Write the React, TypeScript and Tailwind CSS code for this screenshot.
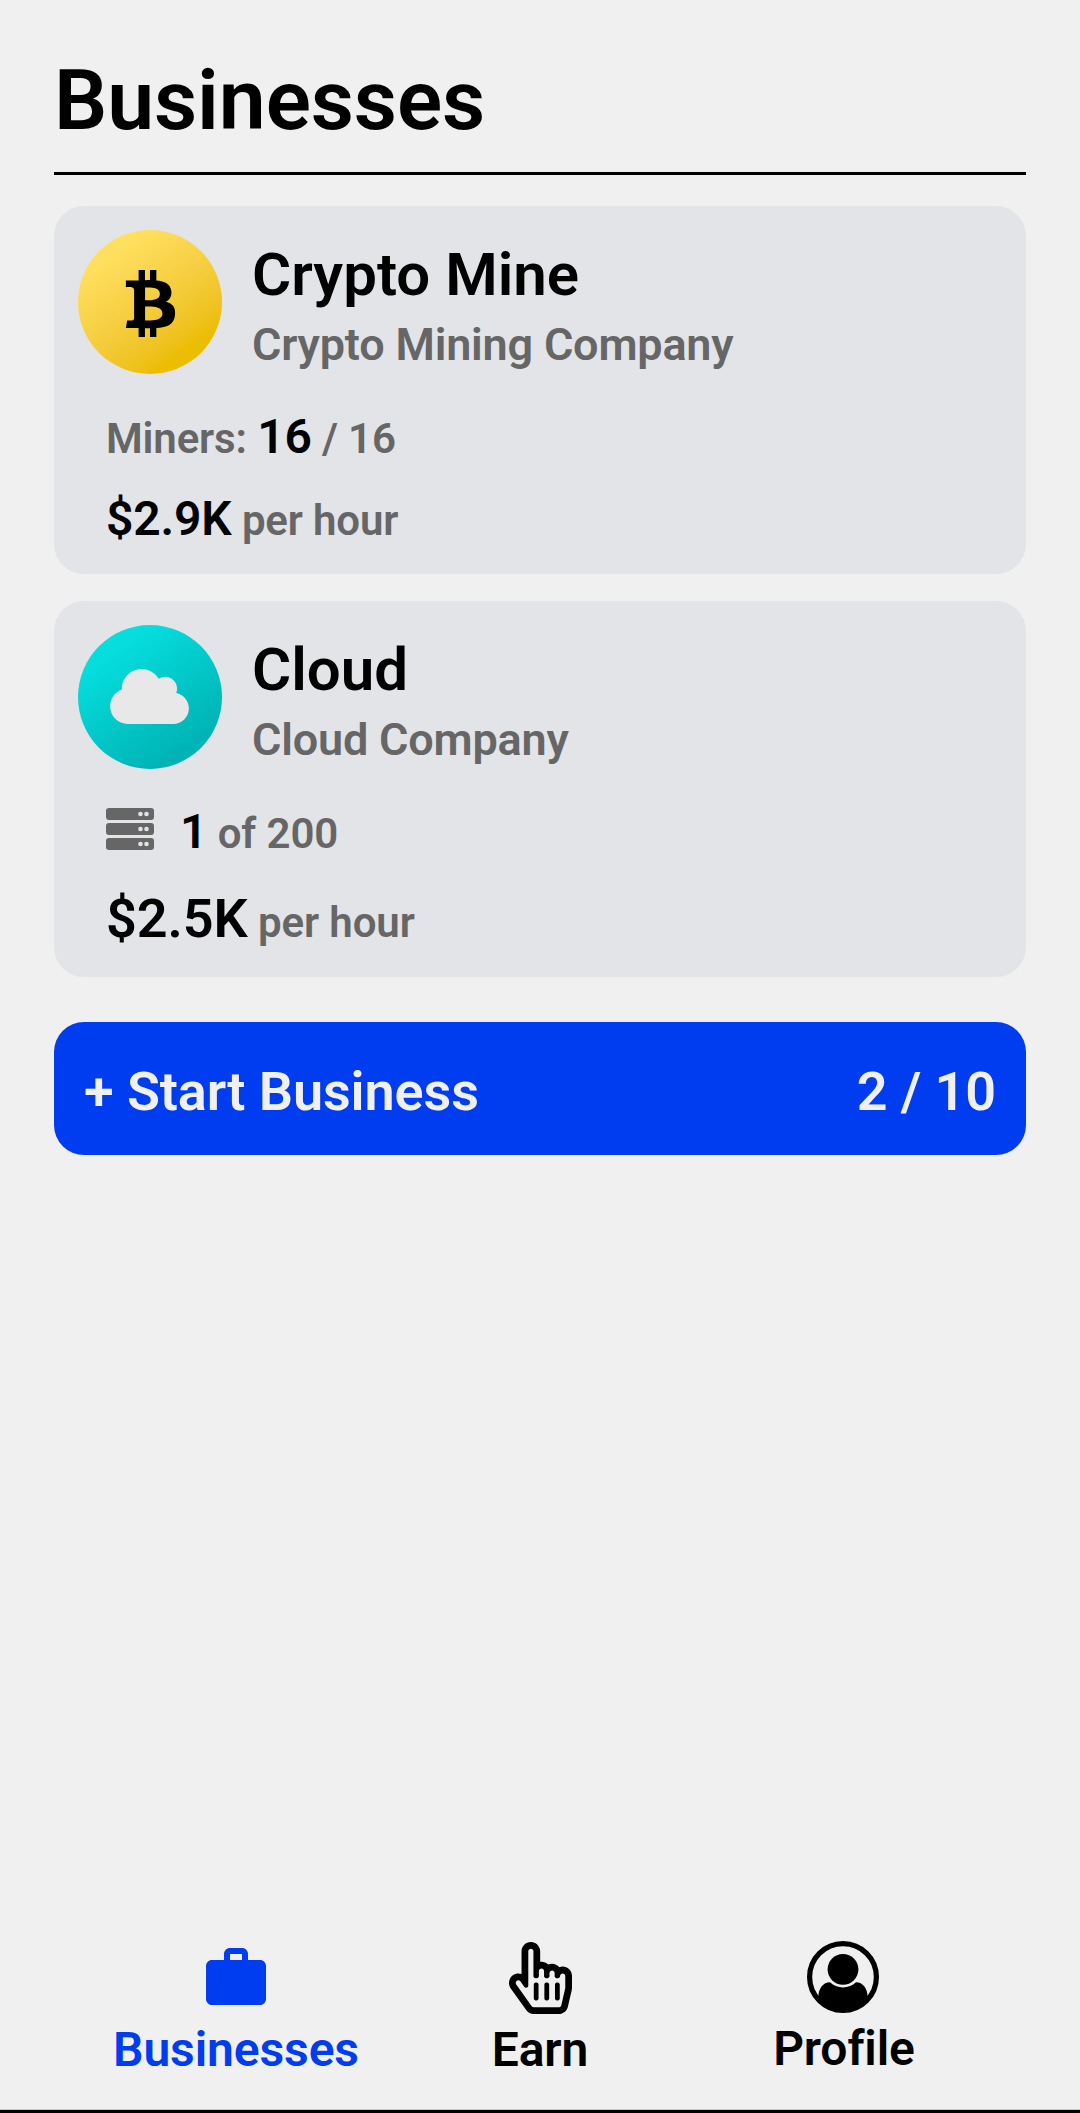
import type { ReactNode } from 'react';
import { FaBtc, FaCloud, FaRegHandPointer } from 'react-icons/fa';
import { MdWork } from 'react-icons/md';

function ServerIcon() {
  return (
    <svg viewBox="0 0 48 42" className="h-[42px] w-12">
      {[0, 15, 30].map((y) => (
        <g key={y}>
          <rect y={y} width="48" height="12" rx="3" fill="#666666" />
          <circle cx="34.5" cy={y + 6} r="2.3" fill="#e2e4e8" />
          <circle cx="40.5" cy={y + 6} r="2.3" fill="#e2e4e8" />
        </g>
      ))}
    </svg>
  );
}

function ProfileIcon() {
  return (
    <svg viewBox="0 0 72 72" className="-mt-px mr-0.5 size-[72px]">
      <circle cx="36" cy="36" r="33.4" fill="none" stroke="currentColor" strokeWidth="5.2" />
      <circle cx="36" cy="28.3" r="15.4" fill="currentColor" />
      <path
        d="M23 41.3C26.5 44.6 31 46.5 36 46.5S45.5 44.6 49 41.3C56 41.3 60.3 47.5 60.6 55.5C55 64.5 46 70 36 70S17 64.5 11.4 55.5C11.7 47.5 16 41.3 23 41.3Z"
        fill="currentColor"
      />
    </svg>
  );
}

type BusinessCardProps = {
  name: string;
  kind: string;
  icon: ReactNode;
  iconClass: string;
  className: string;
  children: ReactNode;
};

function BusinessCard({ name, kind, icon, iconClass, className, children }: BusinessCardProps) {
  return (
    <article className={`rounded-[30px] bg-[#e2e4e8] p-6 ${className}`}>
      <div className="flex gap-[30px]">
        <div
          className={`flex size-36 items-center justify-center rounded-full bg-linear-145 ${iconClass}`}
        >
          {icon}
        </div>
        <div className="pt-[9px]">
          <h2 className="text-[60px] leading-[71px] text-black">{name}</h2>
          <p className="text-[45px] leading-[70px] tracking-[-0.2px] text-[#666666]">{kind}</p>
        </div>
      </div>
      {children}
    </article>
  );
}

function NavItem({ label, active, children }: { label: string; active?: boolean; children: ReactNode }) {
  return (
    <button
      type="button"
      className={`flex w-[304px] flex-col items-center ${active ? 'text-[#003cf0]' : 'text-black'}`}
    >
      {children}
      <span className="mt-2 text-5xl leading-[56px] tracking-[-0.1px]">{label}</span>
    </button>
  );
}

export default function App() {
  return (
    <div className="flex h-[2113px] w-[1080px] flex-col border-b-[3px] border-black bg-[#f0f0f0] font-['Roboto',sans-serif] font-semibold">
      <main className="flex-1 px-[54px] pt-[52px]">
        <h1 className="h-[120px] text-[84px] leading-[98px] tracking-[-0.1px] text-black">Businesses</h1>
        <hr className="border-t-[3px] border-black" />

        <BusinessCard
          name="Crypto Mine"
          kind="Crypto Mining Company"
          icon={<FaBtc className="mt-[3px] size-[67px] text-black" />}
          iconClass="from-[#ffdf5e] from-20% to-[#ecbd00] to-80%"
          className="mt-[31px] h-[368px]"
        >
          <div className="pl-7 pt-[29px] text-[42px] leading-[56px] tracking-[-0.15px] text-[#666666]">
            <p>
              Miners: <span className="text-5xl leading-[56px] text-black">16</span> / 16
            </p>
            <p className="mt-6">
              <span className="text-5xl leading-[56px] text-black">$2.9K</span> per hour
            </p>
          </div>
        </BusinessCard>

        <BusinessCard
          name="Cloud"
          kind="Cloud Company"
          icon={<FaCloud className="-mt-px mr-px h-[63px] w-[79px] text-[#e8e8e8]" />}
          iconClass="from-[#06dede] from-20% to-[#00b4b6] to-80%"
          className="mt-[27px] h-[376px]"
        >
          <div className="pl-7 pt-[29px] text-[42px] leading-[56px] tracking-[-0.1px] text-[#666666]">
            <div className="flex">
              <div className="mr-[26px] pt-1">
                <ServerIcon />
              </div>
              <p>
                <span className="text-5xl leading-[56px] text-black">1</span> of 200
              </p>
            </div>
            <p className="mt-[25px] leading-[64px]">
              <span className="text-[54px] leading-[64px] text-black">$2.5K</span> per hour
            </p>
          </div>
        </BusinessCard>

        <button
          type="button"
          className="mt-[45px] flex h-[133px] w-full items-center justify-between rounded-[30px] bg-[#003cf0] px-[30px] pt-1.5 text-[54px] tracking-[-0.1px] text-[#f0f0f0]"
        >
          <span>+ Start Business</span>
          <span>2 / 10</span>
        </button>
      </main>

      <nav className="flex h-[202px] justify-center border-b border-[#c8c8c8] bg-[#f0f0f0] pt-[34px]">
        <NavItem label="Businesses" active>
          <MdWork className="size-[72px]" />
        </NavItem>
        <NavItem label="Earn">
          <FaRegHandPointer className="h-[72px] w-[63px]" />
        </NavItem>
        <NavItem label="Profile">
          <ProfileIcon />
        </NavItem>
      </nav>
    </div>
  );
}
